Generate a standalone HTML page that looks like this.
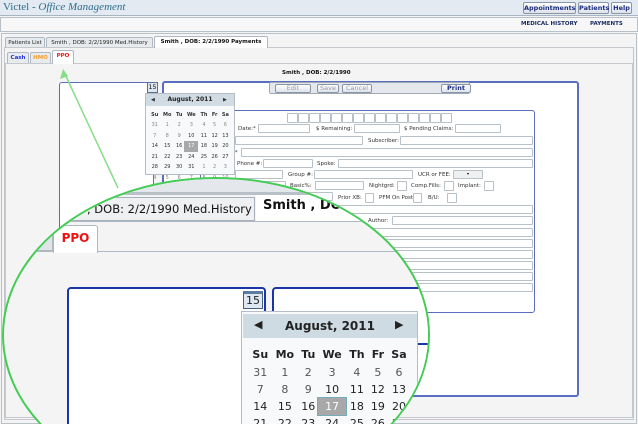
<!DOCTYPE html>
<html><head><meta charset="utf-8"><style>
*{margin:0;padding:0;box-sizing:border-box}
html,body{width:638px;height:424px;overflow:hidden}
body{background:#f4f4f4;font-family:"DejaVu Sans","Liberation Sans",sans-serif;position:relative}
#w{position:absolute;left:0;top:0;width:638px;height:424px;overflow:hidden}
.a{position:absolute}
.t{position:absolute;font-size:5.5px;color:#333;white-space:nowrap;line-height:8px}
.i{position:absolute;background:#fff;border:1px solid #b8c0c8;border-radius:1px}
.btn{position:absolute;border:1px solid #8a96a6;border-radius:2px;background:linear-gradient(#fff,#dde3ea);font-size:6.5px;font-weight:bold;color:#1a2c80;text-align:center;line-height:10px;white-space:nowrap}
.tab{position:absolute;border:1px solid #b0b8c4;border-bottom:none;background:#e8ebee;font-size:5.5px;color:#222;text-align:center;line-height:10px;border-radius:2px 2px 0 0;white-space:nowrap;overflow:hidden}
.cal td{text-align:center}
</style></head><body><div id="w">
<div class="a" style="left:0;top:0;width:638px;height:16px;background:#e3eaf1;border-bottom:1px solid #a8b4c0"></div>
<div class="a" style="left:3px;top:1px;font-family:'Liberation Serif',serif;font-size:11px;color:#2e6d8e;white-space:nowrap">Victel - <i>Office Management</i></div>
<div class="btn" style="left:523px;top:2px;width:53px;height:12px">Appointments</div>
<div class="btn" style="left:578px;top:2px;width:31px;height:12px">Patients</div>
<div class="btn" style="left:611px;top:2px;width:21px;height:12px">Help</div>
<div class="a" style="left:0;top:17px;width:638px;height:15px;background:#f7f7f7;border:1px solid #b8c0c8"></div>
<div class="t" style="left:521px;top:20px;font-weight:bold;color:#1a2c60">MEDICAL HISTORY</div>
<div class="t" style="left:590px;top:20px;font-weight:bold;color:#1a2c60">PAYMENTS</div>
<div class="a" style="left:1px;top:33px;width:636px;height:391px;border:1px solid #b8c0c8;background:#f4f4f4"></div>
<div class="a" style="left:4px;top:47px;width:630px;height:373px;border:1px solid #c4c8cc"></div>
<div class="tab" style="left:5px;top:37px;width:40px;height:10px">Patients List</div>
<div class="tab" style="left:46px;top:37px;width:107px;height:10px">Smith , DOB: 2/2/1990 Med.History</div>
<div class="tab" style="left:154px;top:36px;width:114px;height:12px;background:#fff;font-weight:bold;color:#111">Smith , DOB: 2/2/1990 Payments</div>
<div class="a" style="left:5px;top:63px;width:628px;height:355px;border:1px solid #c4c8cc;background:#f4f4f4"></div>
<div class="tab" style="left:7px;top:52px;width:22px;height:11px;font-weight:bold;color:#2233dd">Cash</div>
<div class="tab" style="left:30px;top:52px;width:21px;height:11px;font-weight:bold;color:#f0a030">HMO</div>
<div class="tab" style="left:52px;top:50px;width:22px;height:14px;background:#fff;font-weight:bold;color:#ee1111">PPO</div>
<div class="t" style="left:282px;top:69px;font-weight:bold;color:#111">Smith , DOB: 2/2/1990</div>
<div class="a" style="left:59px;top:82px;width:95px;height:300px;border:1px solid #5a6ec0;border-radius:3px;background:#fff"></div>
<div class="a" style="left:147px;top:82px;width:11px;height:11px;border:1px solid #5a7090;background:#dbe6f0;font-size:6px;text-align:center;line-height:9px">15</div>
<div class="a" style="left:162px;top:81px;width:417px;height:316px;border:2px solid #5a6ec0;border-radius:3px;background:#fff"></div>
<div class="a" style="left:269px;top:82px;width:201px;height:12px;border:1px solid #a0a8b4;background:#e4e8ec;border-radius:2px"></div>
<div class="btn" style="left:275px;top:84px;width:36px;height:9px;line-height:7px;color:#99a;font-weight:normal">Edit</div>
<div class="btn" style="left:317px;top:84px;width:22px;height:9px;line-height:7px;color:#99a;font-weight:normal">Save</div>
<div class="btn" style="left:342px;top:84px;width:30px;height:9px;line-height:7px;color:#99a;font-weight:normal">Cancel</div>
<div class="btn" style="left:441px;top:84px;width:30px;height:9px;line-height:7px">Print</div>
<div class="a" style="left:200px;top:110px;width:335px;height:203px;border:1px solid #5a6ec0;border-radius:3px;background:#fff"></div>
<div class="a" style="left:287px;top:113px;height:10px;display:flex">
<div class="i" style="position:static;width:11px;height:10px"></div><div class="i" style="position:static;width:11px;height:10px"></div><div class="i" style="position:static;width:11px;height:10px"></div><div class="i" style="position:static;width:11px;height:10px"></div><div class="i" style="position:static;width:11px;height:10px"></div><div class="i" style="position:static;width:11px;height:10px"></div><div class="i" style="position:static;width:11px;height:10px"></div><div class="i" style="position:static;width:11px;height:10px"></div><div class="i" style="position:static;width:11px;height:10px"></div><div class="i" style="position:static;width:11px;height:10px"></div><div class="i" style="position:static;width:11px;height:10px"></div><div class="i" style="position:static;width:11px;height:10px"></div><div class="i" style="position:static;width:11px;height:10px"></div><div class="i" style="position:static;width:11px;height:10px"></div><div class="i" style="position:static;width:11px;height:10px"></div></div>
<div class="t" style="left:238px;top:125px">Date:*</div><div class="i" style="left:258px;top:124px;width:52px;height:9px"></div>
<div class="t" style="left:316px;top:125px">$ Remaining:</div><div class="i" style="left:354px;top:124px;width:46px;height:9px"></div>
<div class="t" style="left:404px;top:125px">$ Pending Claims:</div><div class="i" style="left:455px;top:124px;width:46px;height:9px"></div>
<div class="i" style="left:235px;top:136px;width:128px;height:9px"></div>
<div class="t" style="left:368px;top:137px">Subscriber:</div><div class="i" style="left:400px;top:136px;width:133px;height:9px"></div>
<div class="t" style="left:233px;top:149px">:*</div><div class="i" style="left:241px;top:148px;width:292px;height:9px"></div>
<div class="t" style="left:237px;top:160px">Phone #:</div><div class="i" style="left:263px;top:159px;width:50px;height:9px"></div>
<div class="t" style="left:317px;top:160px">Spoke:</div><div class="i" style="left:338px;top:159px;width:195px;height:9px"></div>
<div class="i" style="left:235px;top:170px;width:48px;height:9px"></div>
<div class="t" style="left:288px;top:171px">Group #:</div><div class="i" style="left:314px;top:170px;width:99px;height:9px"></div>
<div class="t" style="left:418px;top:171px">UCR or FEE:</div><div class="i" style="left:453px;top:170px;width:30px;height:9px;background:#eef0f2;font-size:4px;text-align:center">▾</div>
<div class="i" style="left:235px;top:181px;width:51px;height:9px"></div>
<div class="t" style="left:290px;top:182px">Basic%:</div><div class="i" style="left:315px;top:181px;width:49px;height:9px"></div>
<div class="t" style="left:369px;top:182px">Nightgrd:</div><div class="i" style="left:397px;top:181px;width:10px;height:10px"></div>
<div class="t" style="left:411px;top:182px">Comp.Fills:</div><div class="i" style="left:444px;top:181px;width:10px;height:10px"></div>
<div class="t" style="left:458px;top:182px">Implant:</div><div class="i" style="left:484px;top:181px;width:10px;height:10px"></div>
<div class="i" style="left:235px;top:192px;width:98px;height:9px"></div>
<div class="t" style="left:338px;top:194px">Prior XB:</div><div class="i" style="left:365px;top:193px;width:9px;height:10px"></div>
<div class="t" style="left:379px;top:194px">PFM On Post.:</div><div class="i" style="left:413px;top:193px;width:9px;height:10px"></div>
<div class="t" style="left:428px;top:194px">B/U:</div><div class="i" style="left:447px;top:193px;width:10px;height:10px"></div>
<div class="i" style="left:235px;top:205px;width:298px;height:9px"></div>
<div class="t" style="left:368px;top:217px">Author:</div><div class="i" style="left:392px;top:216px;width:141px;height:9px"></div>
<div class="i" style="left:235px;top:228px;width:298px;height:9px"></div>
<div class="i" style="left:235px;top:239px;width:298px;height:9px"></div>
<div class="i" style="left:235px;top:250px;width:298px;height:9px"></div>
<div class="i" style="left:235px;top:261px;width:298px;height:9px"></div>
<div class="i" style="left:235px;top:272px;width:298px;height:9px"></div>
<div class="i" style="left:235px;top:283px;width:298px;height:9px"></div>
<div class="a" style="left:145px;top:93px;width:90px;height:82px;border:1px solid #b4bcc6;background:#f8f9fa"></div>
<div class="a" style="left:146px;top:94px;width:88px;height:12px;background:#d0dbe4;font-size:6px;font-weight:bold;color:#222;line-height:12px;text-align:center">August, 2011</div>
<div class="t" style="left:151px;top:96px;font-size:5px">◀</div><div class="t" style="left:223px;top:96px;font-size:5px">▶</div>
<table class="cal a" style="left:149px;top:110px;width:82px;border-collapse:collapse;font-size:5px;color:#333">
<tr style="height:10px;font-weight:bold"><td>Su</td><td>Mo</td><td>Tu</td><td>We</td><td>Th</td><td>Fr</td><td>Sa</td></tr>
<tr style="height:10.5px;color:#888"><td>31</td><td>1</td><td>2</td><td>3</td><td>4</td><td>5</td><td>6</td></tr>
<tr style="height:10.5px"><td style="color:#888">7</td><td style="color:#888">8</td><td style="color:#888">9</td><td>10</td><td>11</td><td>12</td><td>13</td></tr>
<tr style="height:10.5px"><td>14</td><td>15</td><td>16</td><td style="background:#a8a8a8;color:#fff">17</td><td>18</td><td>19</td><td>20</td></tr>
<tr style="height:10.5px"><td>21</td><td>22</td><td>23</td><td>24</td><td>25</td><td>26</td><td>27</td></tr>
<tr style="height:10.5px"><td>28</td><td>29</td><td>30</td><td>31</td><td style="color:#888">1</td><td style="color:#888">2</td><td style="color:#888">3</td></tr>
<tr style="height:10.5px;color:#888"><td>4</td><td>5</td><td>6</td><td>7</td><td>8</td><td>9</td><td>10</td></tr>
</table>
<svg class="a" style="left:0;top:0" width="638" height="424"><line x1="64" y1="72" x2="118" y2="188" stroke="#88dd88" stroke-width="1.5"/><polygon points="63,69 60,79 68,76" fill="#88dd88"/></svg>
<div class="a" style="left:2px;top:177px;width:428px;height:316px;border-radius:50%;border:2px solid #44cc55;overflow:hidden;background:#f4f4f4">
<div class="a" style="left:-4px;top:-179px;width:640px;height:620px">
<div class="a" style="left:0;top:177px;width:640px;height:18px;background:#e4e8ec;border-bottom:3px solid #b8c0c8"></div>
<div class="a" style="left:0;top:197px;width:255px;height:24px;background:#eef0f2;border:1px solid #a8b0bc;font-size:11.5px;color:#111;line-height:22px;padding-left:86px;white-space:nowrap;overflow:hidden">, DOB: 2/2/1990 Med.History</div>
<div class="a" style="left:256px;top:195px;width:300px;height:27px;background:#fff;font-size:13px;font-weight:bold;color:#111;line-height:22px;padding-left:7px;white-space:nowrap">Smith , DOB:</div>
<div class="a" style="left:0;top:221px;width:640px;height:1px;background:#b0b8c4"></div>
<div class="a" style="left:30px;top:228px;width:23px;height:23px;background:#e0e4e8;border:1px solid #b0b8c4"></div>
<div class="a" style="left:53px;top:225px;width:45px;height:28px;background:#fff;border:1px solid #b0b8c4;border-bottom:none;border-radius:3px 3px 0 0;font-size:12px;font-weight:bold;color:#ee1111;line-height:24px;text-align:center">PPO</div>
<div class="a" style="left:0;top:251px;width:53px;height:1px;background:#b0b8c4"></div>
<div class="a" style="left:98px;top:251px;width:540px;height:1px;background:#b0b8c4"></div>
<div class="a" style="left:67px;top:287px;width:199px;height:300px;border:2px solid #1a35a8;border-radius:4px;background:#fff"></div>
<div class="a" style="left:272px;top:287px;width:300px;height:300px;border:2px solid #1a35a8;border-radius:4px;background:#fff"></div>
<div class="a" style="left:400px;top:343px;width:200px;height:80px;border:2px solid #1a35a8;background:#fff"></div>
<div class="a" style="left:243px;top:291px;width:20px;height:18px;border:1px solid #45607e;border-top:3px solid #5a7ca0;background:#dde8f2;font-size:11px;text-align:center;line-height:14px;color:#222">15</div>
<div class="a" style="left:241px;top:311px;width:177px;height:130px;border:1px solid #b4bcc6;background:#f8f9fa"></div>
<div class="a" style="left:243px;top:314px;width:174px;height:24px;background:#cfdbe3;font-size:12px;font-weight:bold;color:#222;line-height:24px;text-align:center">August, 2011</div>
<div class="a" style="left:254px;top:318px;font-size:11px;color:#222">◀</div>
<div class="a" style="left:395px;top:318px;font-size:11px;color:#222">▶</div>
<table class="cal a" style="left:249px;top:344px;width:161px;border-collapse:collapse;font-size:11px;color:#222">
<tr style="height:20px;font-weight:bold"><td>Su</td><td>Mo</td><td>Tu</td><td>We</td><td>Th</td><td>Fr</td><td>Sa</td></tr>
<tr style="height:17px;color:#555"><td>31</td><td>1</td><td>2</td><td>3</td><td>4</td><td>5</td><td>6</td></tr>
<tr style="height:17px"><td style="color:#555">7</td><td style="color:#555">8</td><td style="color:#555">9</td><td>10</td><td>11</td><td>12</td><td>13</td></tr>
<tr style="height:17px"><td>14</td><td>15</td><td>16</td><td style="background:#a8a8a8;color:#fff;outline:1px solid #7ab">17</td><td>18</td><td>19</td><td>20</td></tr>
<tr style="height:17px"><td>21</td><td>22</td><td>23</td><td>24</td><td>25</td><td>26</td><td>27</td></tr>
</table>
</div></div>
</div></body></html>
